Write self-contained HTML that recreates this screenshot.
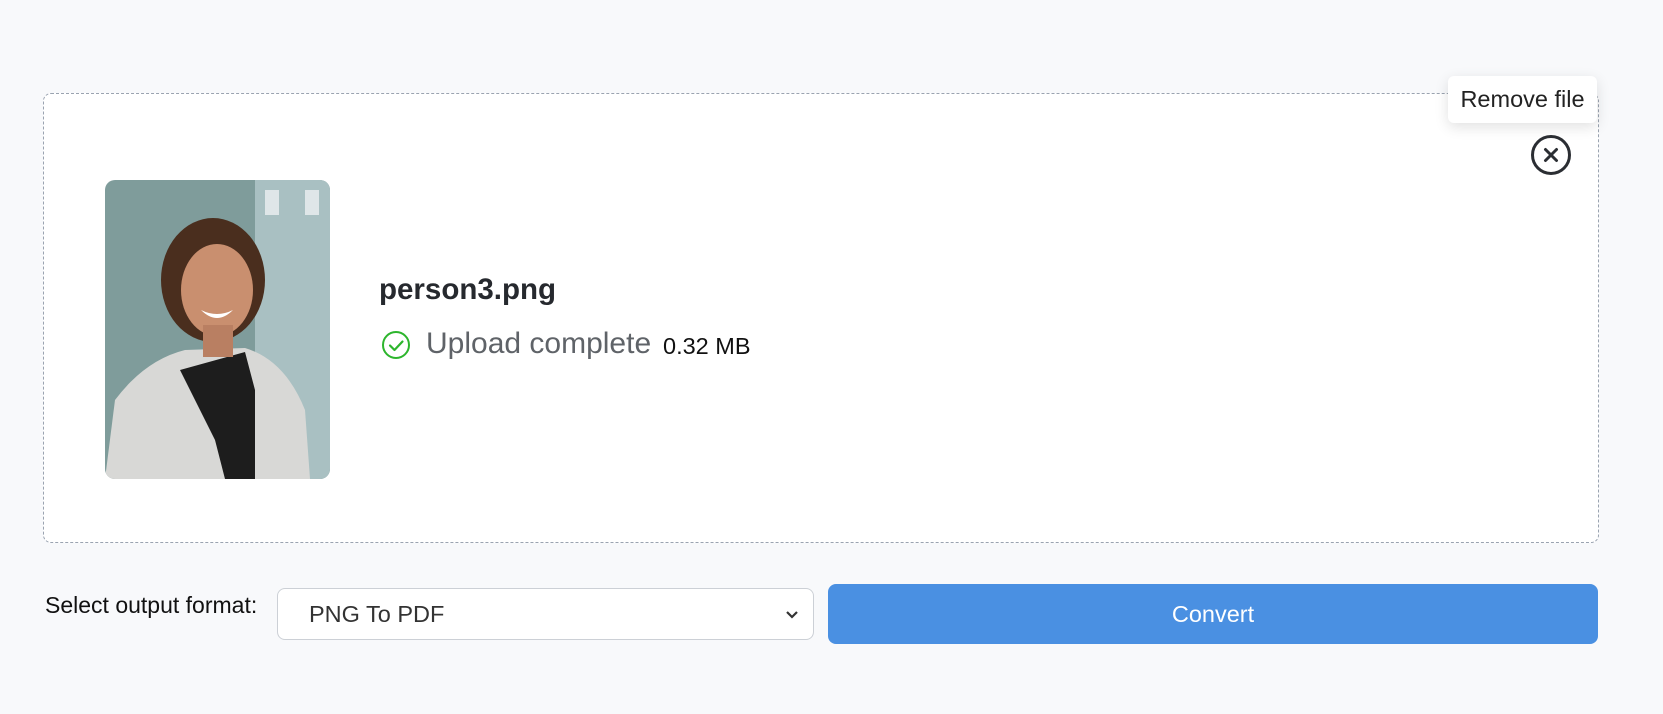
<!DOCTYPE html>
<html><head><style>
body{margin:0;width:1663px;height:714px;background:#f8f9fb;font-family:"Liberation Sans",Arial,sans-serif;position:relative;overflow:hidden}
.box{position:absolute;left:43px;top:93px;width:1554px;height:448px;border:1px dashed #9aa3b0;border-radius:8px;background:#fff}
.photo{position:absolute;left:105px;top:180px;width:225px;height:299px;border-radius:10px;overflow:hidden}
.name{position:absolute;left:379px;top:273px;font-size:29.5px;font-weight:bold;color:#26292e}
.chk{position:absolute;left:381px;top:330px}
.up{position:absolute;left:426px;top:327px;font-size:30px;color:#5f6368}
.mb{position:absolute;left:663px;top:333px;font-size:23.5px;color:#111}
.tip{position:absolute;left:1448px;top:76px;width:149px;height:47px;background:#fff;border-radius:6px;box-shadow:0 4px 14px rgba(0,0,0,.12);font-size:23.5px;color:#222;line-height:47px;text-align:center}
.lab{position:absolute;left:45px;top:592px;font-size:23px;color:#111}
.sel{position:absolute;left:277px;top:588px;width:537px;height:52px;border:1px solid #ccd0d6;border-radius:8px;background:#fff;box-sizing:border-box;font-size:23.5px;color:#333;padding-left:31px;line-height:50px}
.btn{position:absolute;left:828px;top:584px;width:770px;height:60px;background:#4a90e2;border-radius:8px;color:#fff;font-size:23.5px;text-align:center;line-height:60px}
</style></head><body>
<div class="box"></div>
<div class="photo">
<svg width="225" height="299" viewBox="0 0 225 299">
<rect x="0" y="0" width="225" height="299" fill="#7f9c9b"/>
<rect x="150" y="0" width="75" height="299" fill="#a9c0c2"/>
<rect x="160" y="10" width="14" height="25" fill="#dfe6e8"/>
<rect x="200" y="10" width="14" height="25" fill="#dfe6e8"/>
<path d="M0 299 L10 220 Q40 180 80 170 L140 168 Q180 180 200 230 L205 299Z" fill="#d8d8d6"/>
<path d="M75 190 L110 260 L120 299 L150 299 L150 210 L140 172 Z" fill="#1d1d1d"/>
<ellipse cx="108" cy="100" rx="52" ry="62" fill="#4a2e1e"/>
<ellipse cx="112" cy="110" rx="36" ry="46" fill="#c98f6f"/>
<rect x="98" y="145" width="30" height="32" fill="#b97f62"/>
<path d="M96 130 Q112 146 128 130 Q112 138 96 130Z" fill="#fff"/>
</svg>
</div>
<div class="name">person3.png</div>
<svg class="chk" width="30" height="30" viewBox="0 0 30 30"><circle cx="15" cy="15" r="13" fill="none" stroke="#2db52d" stroke-width="2"/><path d="M9 15.5l4.5 4.5 8-8.5" fill="none" stroke="#2db52d" stroke-width="2.2" stroke-linecap="round" stroke-linejoin="round"/></svg>
<div class="up">Upload complete</div>
<div class="mb">0.32 MB</div>
<div class="tip">Remove file</div>
<svg style="position:absolute;left:1530px;top:134px" width="42" height="42" viewBox="0 0 42 42"><circle cx="21" cy="21" r="18.5" fill="none" stroke="#2b2e33" stroke-width="3"/><path d="M15.5 15.5l11 11M26.5 15.5l-11 11" stroke="#2b2e33" stroke-width="3" stroke-linecap="round"/></svg>
<div class="lab">Select output format:</div>
<div class="sel">PNG To PDF<svg style="position:absolute;right:14px;top:21px" width="14" height="10" viewBox="0 0 14 10"><path d="M2 2l5 5 5-5" fill="none" stroke="#333" stroke-width="2.2"/></svg></div>
<div class="btn">Convert</div>
</body></html>
